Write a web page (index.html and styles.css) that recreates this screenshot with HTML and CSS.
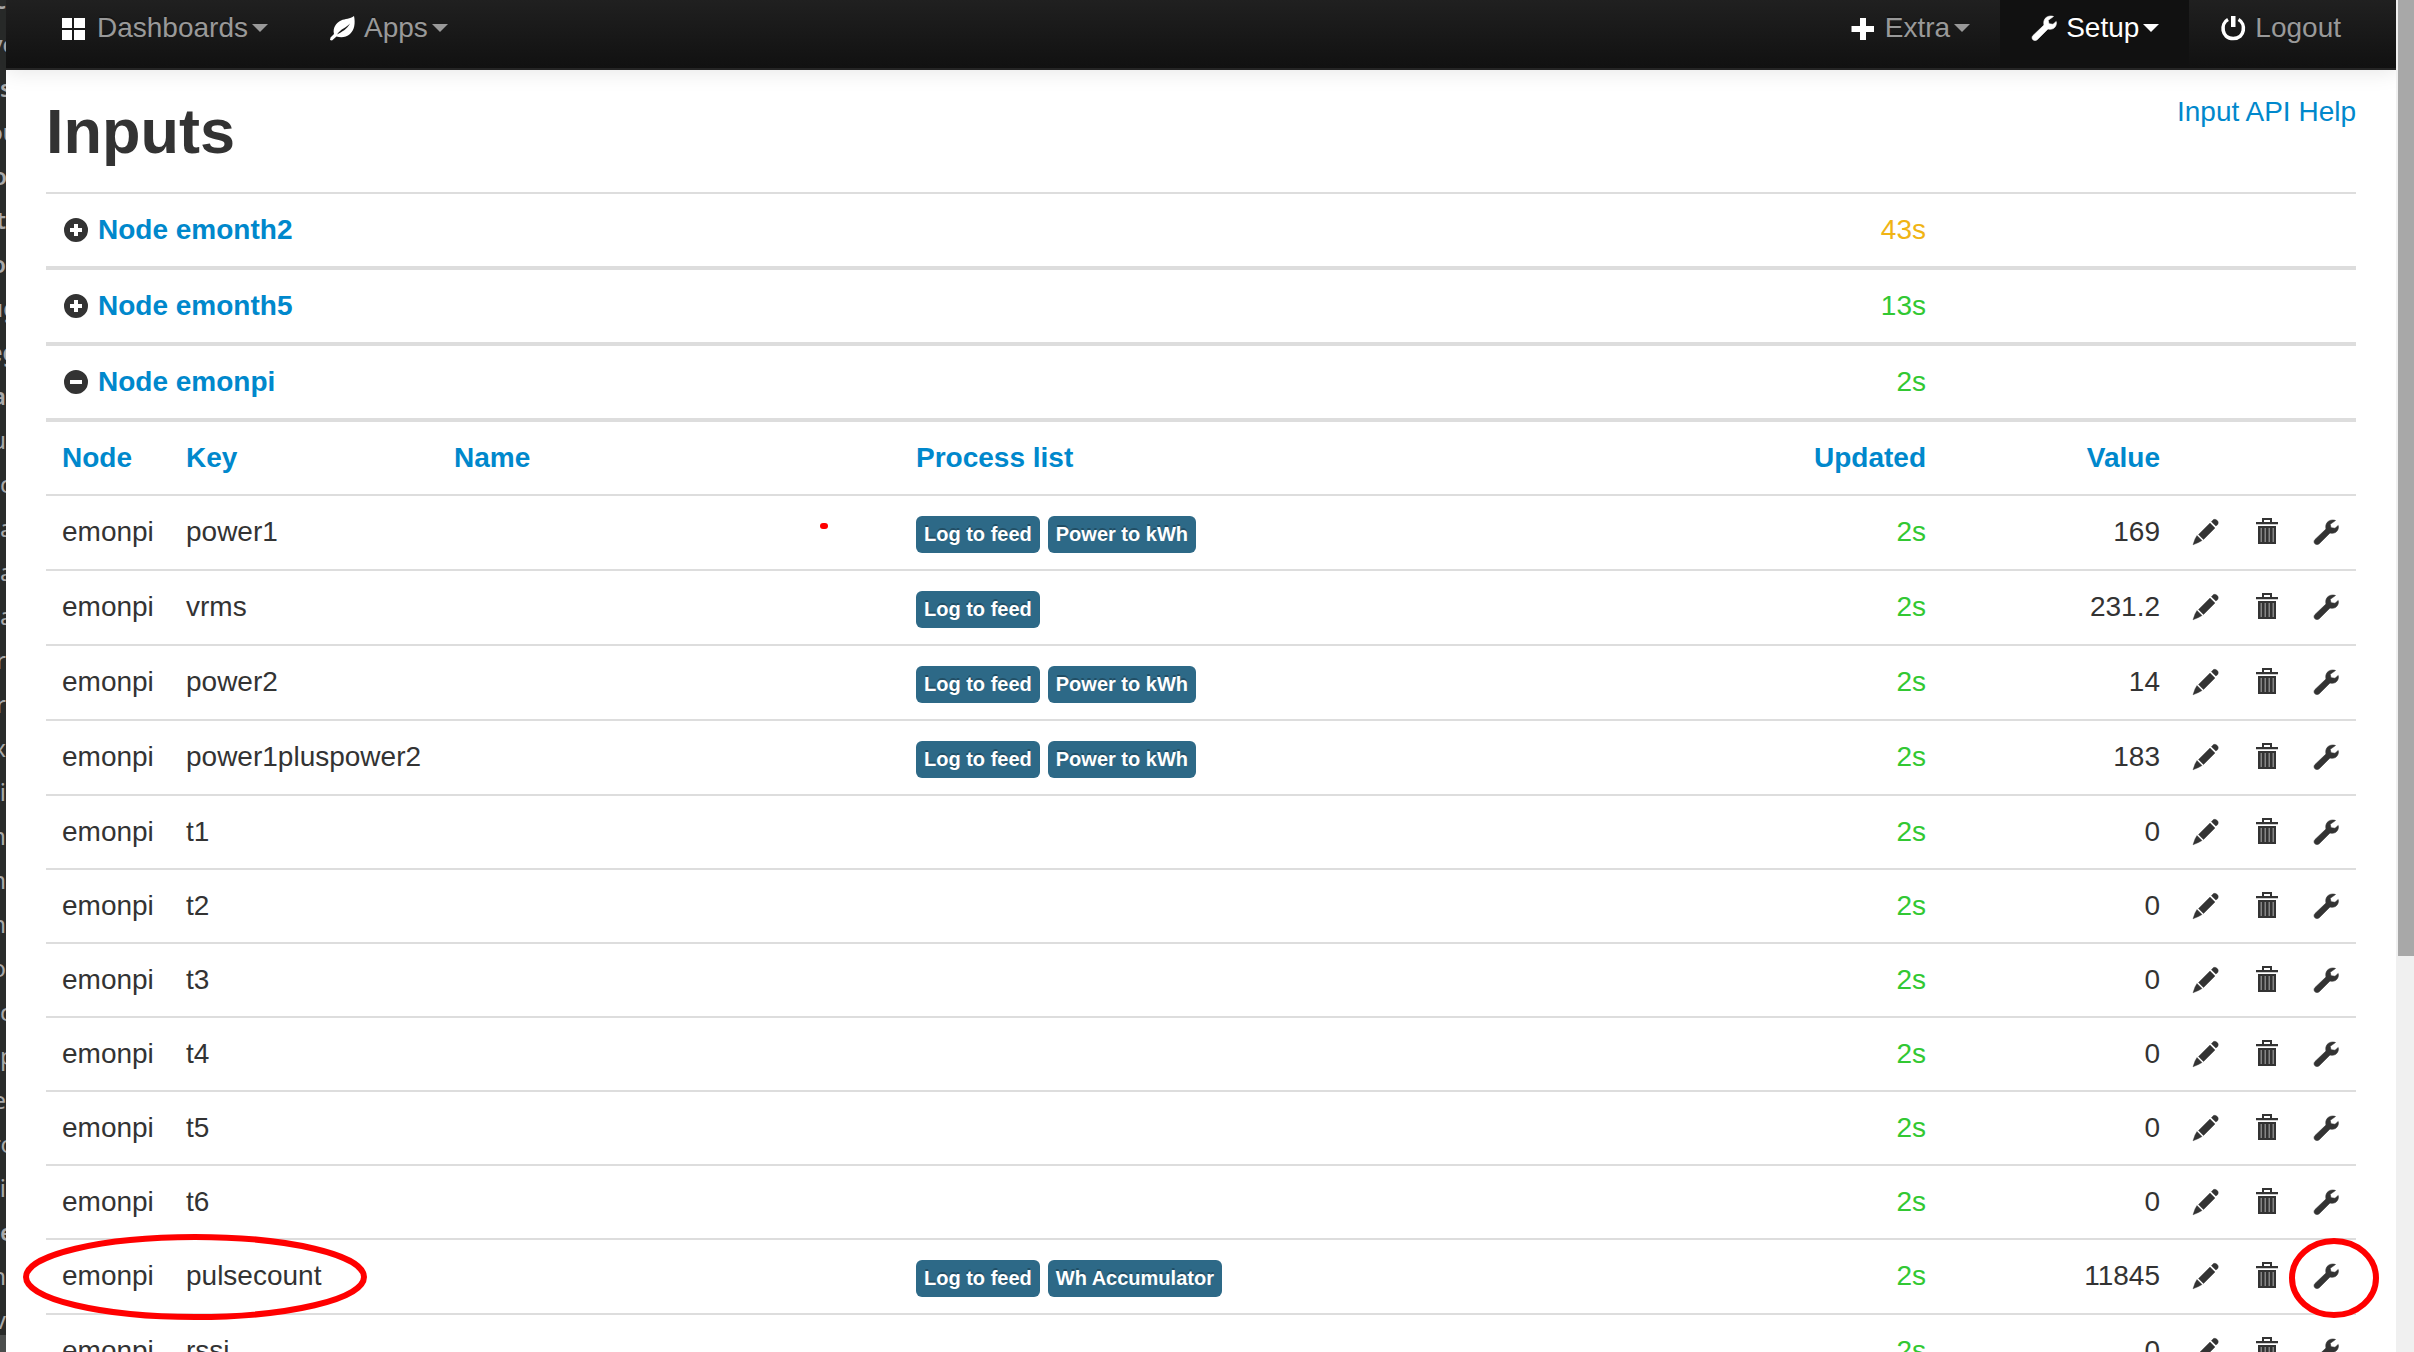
FILE: index.html
```html
<!DOCTYPE html>
<html lang="en">
<head>
<meta charset="utf-8">
<title>Inputs</title>
<link rel="stylesheet" href="styles.css">
</head>
<body>
<svg class="sprite" aria-hidden="true">
  <symbol id="grid" viewBox="0 0 28 28"><path d="M1 4h10v10H1zM13 4h11v10H13zM1 16h10v10H1zM13 16h11v10H13z"/></symbol>
  <symbol id="leaf" viewBox="0 0 28 28"><path fill-rule="evenodd" d="M26 2c1.500 7 .5 14-4 18-4 3.500-9 4-13.500 2.500L4 26.500l-2-.5.500-2.500L6 20C4.500 14 8 9 13 6.500 17.500 4.500 22 5 26 2zM9 20.500c5-2.500 10-5.500 13-11-4 4.500-9 5-13 11z"/></symbol>
  <symbol id="plus" viewBox="0 0 28 28"><path d="M11 4h6v8h8v6h-8v8h-6v-8H2.500v-6H11z"/></symbol>
  <symbol id="wrench" viewBox="0 0 28 28"><path stroke="currentColor" stroke-width=".6" d="M23.500 2.500C20 1.300 16 2.500 14.500 5.500c-1 2-.8 4-.5 5.500L3 21.500c-1.500 1.500-1 3.500 0 4.300 1 1 3 1 4.200 0L18 15c2.500.6 5 .3 6.800-1.700 1.500-1.700 1.900-4 1.400-5.800L23 10.300l-4-.6-.8-3.400z"/></symbol>
  <symbol id="power" viewBox="0 0 28 28"><path d="M12 2h4.500v11H12z"/><path d="M9 5.500C1.500 9.500 2 24.500 14.200 24.500S27 9.500 19.500 5.500" fill="none" stroke="currentColor" stroke-width="3.600"/></symbol>
  <symbol id="pencil" viewBox="0 0 28 28"><path stroke="currentColor" stroke-width=".4" d="M20.500 2.500c1-1.500 3-1.500 4.500-.2 1.600 1.400 1.600 3.200.4 4.600l-1.600 1-4.400-4.200zM18 5l5 5L11.500 21.500l-5-5zM5 17.500l5 5-3.500 2L1 26.800 3 21z"/></symbol>
  <symbol id="trash" viewBox="0 0 28 28"><path fill-rule="evenodd" d="M10 0h10v4h6v2H4V4h6zm2 2v2h6V2z"/><path d="M4 6h22v1H4z" opacity=".25"/><path fill-rule="evenodd" d="M6 8h18v18H6zm2.500 2v14h1.500V10zm4 0v14H14V10zm4 0v14H18V10zm4 0v14H22V10z"/><path d="M8 10h14v14H8z" opacity=".6"/></symbol>
  <symbol id="plus-sign" viewBox="0 0 28 28"><path fill-rule="evenodd" d="M14 2a12 12 0 1 1 0 24 12 12 0 0 1 0-24zm-2 6v4H8v4h4v4h4v-4h4v-4h-4V8z"/></symbol>
  <symbol id="minus-sign" viewBox="0 0 28 28"><path fill-rule="evenodd" d="M14 2a12 12 0 1 1 0 24 12 12 0 0 1 0-24zM8 12v4h12v-4z"/></symbol>
</svg>
<div class="app">
  <aside class="gutter">
    <ul class="gutter-list">
      <li class="strong">c</li><li class="strong split">ve</li><li class="strong start">s</li><li class="strong split">ou</li><li class="strong split">ol</li><li class="strong">t</li><li class="strong">o</li><li class="strong split">ug</li><li class="strong split">eg</li><li class="strong">a</li><li>u</li><li class="start">c</li><li class="start">a</li><li class="start">a</li><li class="start">a</li><li>r</li><li>r</li><li>x</li><li>i</li><li>m</li><li>n</li><li>n</li><li>o</li><li class="start">c</li><li class="start">p</li><li>e</li><li class="split">ro</li><li>ti</li><li class="strong start">e</li><li>h</li><li>v</li>
    </ul>
  </aside>
  <div class="page">
    <nav class="navbar">
      <div class="nav-group">
        <a class="nav-link" href="#"><svg class="icon"><use href="#grid"/></svg>Dashboards<span class="caret"></span></a>
        <a class="nav-link" href="#"><svg class="icon"><use href="#leaf"/></svg>Apps<span class="caret"></span></a>
      </div>
      <div class="nav-group">
        <a class="nav-link" href="#"><svg class="icon"><use href="#plus"/></svg>Extra<span class="caret"></span></a>
        <a class="nav-link active" href="#"><svg class="icon"><use href="#wrench"/></svg>Setup<span class="caret"></span></a>
        <a class="nav-link" href="#"><svg class="icon"><use href="#power"/></svg>Logout</a>
      </div>
    </nav>
    <main class="content">
      <header class="heading">
        <h1>Inputs</h1>
        <a href="#">Input API Help</a>
      </header>
      <table class="inputs">
        <colgroup><col class="c-node"><col class="c-key"><col class="c-name"><col><col class="c-updated"><col class="c-value"><col class="c-action"><col class="c-action"><col class="c-action"></colgroup>
        <tbody>
          <tr class="group"><th colspan="4"><a class="toggle" href="#"><svg class="icon"><use href="#plus-sign"/></svg>Node emonth2</a></th><td class="num late">43s</td><td colspan="4"></td></tr>
          <tr class="group"><th colspan="4"><a class="toggle" href="#"><svg class="icon"><use href="#plus-sign"/></svg>Node emonth5</a></th><td class="num fresh">13s</td><td colspan="4"></td></tr>
          <tr class="group"><th colspan="4"><a class="toggle" href="#"><svg class="icon"><use href="#minus-sign"/></svg>Node emonpi</a></th><td class="num fresh">2s</td><td colspan="4"></td></tr>
        </tbody>
        <tbody>
          <tr><th><a href="#">Node</a></th><th><a href="#">Key</a></th><th><a href="#">Name</a></th><th><a href="#">Process list</a></th><th class="num"><a href="#">Updated</a></th><th class="num"><a href="#">Value</a></th><th colspan="3"></th></tr>
          <tr><td>emonpi</td><td>power1</td><td class="marked"><span class="mark dot"></span></td><td><div class="labels"><span class="label">Log to feed</span><span class="label">Power to kWh</span></div></td><td class="num fresh">2s</td><td class="num">169</td><td><button class="action" aria-label="Edit"><svg class="icon"><use href="#pencil"/></svg></button></td><td><button class="action" aria-label="Delete"><svg class="icon"><use href="#trash"/></svg></button></td><td><button class="action" aria-label="Configure"><svg class="icon"><use href="#wrench"/></svg></button></td></tr>
          <tr><td>emonpi</td><td>vrms</td><td></td><td><div class="labels"><span class="label">Log to feed</span></div></td><td class="num fresh">2s</td><td class="num">231.2</td><td><button class="action" aria-label="Edit"><svg class="icon"><use href="#pencil"/></svg></button></td><td><button class="action" aria-label="Delete"><svg class="icon"><use href="#trash"/></svg></button></td><td><button class="action" aria-label="Configure"><svg class="icon"><use href="#wrench"/></svg></button></td></tr>
          <tr><td>emonpi</td><td>power2</td><td></td><td><div class="labels"><span class="label">Log to feed</span><span class="label">Power to kWh</span></div></td><td class="num fresh">2s</td><td class="num">14</td><td><button class="action" aria-label="Edit"><svg class="icon"><use href="#pencil"/></svg></button></td><td><button class="action" aria-label="Delete"><svg class="icon"><use href="#trash"/></svg></button></td><td><button class="action" aria-label="Configure"><svg class="icon"><use href="#wrench"/></svg></button></td></tr>
          <tr><td>emonpi</td><td>power1pluspower2</td><td></td><td><div class="labels"><span class="label">Log to feed</span><span class="label">Power to kWh</span></div></td><td class="num fresh">2s</td><td class="num">183</td><td><button class="action" aria-label="Edit"><svg class="icon"><use href="#pencil"/></svg></button></td><td><button class="action" aria-label="Delete"><svg class="icon"><use href="#trash"/></svg></button></td><td><button class="action" aria-label="Configure"><svg class="icon"><use href="#wrench"/></svg></button></td></tr>
          <tr><td>emonpi</td><td>t1</td><td></td><td></td><td class="num fresh">2s</td><td class="num">0</td><td><button class="action" aria-label="Edit"><svg class="icon"><use href="#pencil"/></svg></button></td><td><button class="action" aria-label="Delete"><svg class="icon"><use href="#trash"/></svg></button></td><td><button class="action" aria-label="Configure"><svg class="icon"><use href="#wrench"/></svg></button></td></tr>
          <tr><td>emonpi</td><td>t2</td><td></td><td></td><td class="num fresh">2s</td><td class="num">0</td><td><button class="action" aria-label="Edit"><svg class="icon"><use href="#pencil"/></svg></button></td><td><button class="action" aria-label="Delete"><svg class="icon"><use href="#trash"/></svg></button></td><td><button class="action" aria-label="Configure"><svg class="icon"><use href="#wrench"/></svg></button></td></tr>
          <tr><td>emonpi</td><td>t3</td><td></td><td></td><td class="num fresh">2s</td><td class="num">0</td><td><button class="action" aria-label="Edit"><svg class="icon"><use href="#pencil"/></svg></button></td><td><button class="action" aria-label="Delete"><svg class="icon"><use href="#trash"/></svg></button></td><td><button class="action" aria-label="Configure"><svg class="icon"><use href="#wrench"/></svg></button></td></tr>
          <tr><td>emonpi</td><td>t4</td><td></td><td></td><td class="num fresh">2s</td><td class="num">0</td><td><button class="action" aria-label="Edit"><svg class="icon"><use href="#pencil"/></svg></button></td><td><button class="action" aria-label="Delete"><svg class="icon"><use href="#trash"/></svg></button></td><td><button class="action" aria-label="Configure"><svg class="icon"><use href="#wrench"/></svg></button></td></tr>
          <tr><td>emonpi</td><td>t5</td><td></td><td></td><td class="num fresh">2s</td><td class="num">0</td><td><button class="action" aria-label="Edit"><svg class="icon"><use href="#pencil"/></svg></button></td><td><button class="action" aria-label="Delete"><svg class="icon"><use href="#trash"/></svg></button></td><td><button class="action" aria-label="Configure"><svg class="icon"><use href="#wrench"/></svg></button></td></tr>
          <tr><td>emonpi</td><td>t6</td><td></td><td></td><td class="num fresh">2s</td><td class="num">0</td><td><button class="action" aria-label="Edit"><svg class="icon"><use href="#pencil"/></svg></button></td><td><button class="action" aria-label="Delete"><svg class="icon"><use href="#trash"/></svg></button></td><td><button class="action" aria-label="Configure"><svg class="icon"><use href="#wrench"/></svg></button></td></tr>
          <tr><td class="marked">emonpi<svg class="mark ring-key" viewBox="0 0 344 86"><ellipse cx="172" cy="43" rx="169" ry="40"/></svg></td><td>pulsecount</td><td></td><td><div class="labels"><span class="label">Log to feed</span><span class="label">Wh Accumulator</span></div></td><td class="num fresh">2s</td><td class="num">11845</td><td><button class="action" aria-label="Edit"><svg class="icon"><use href="#pencil"/></svg></button></td><td><button class="action" aria-label="Delete"><svg class="icon"><use href="#trash"/></svg></button></td><td class="marked"><button class="action" aria-label="Configure"><svg class="icon"><use href="#wrench"/></svg></button><svg class="mark ring-action" viewBox="0 0 90 80"><ellipse cx="45" cy="40" rx="42" ry="37"/></svg></td></tr>
          <tr><td>emonpi</td><td>rssi</td><td></td><td></td><td class="num fresh">2s</td><td class="num">0</td><td><button class="action" aria-label="Edit"><svg class="icon"><use href="#pencil"/></svg></button></td><td><button class="action" aria-label="Delete"><svg class="icon"><use href="#trash"/></svg></button></td><td><button class="action" aria-label="Configure"><svg class="icon"><use href="#wrench"/></svg></button></td></tr>
        </tbody>
      </table>
    </main>
  </div>
  <div class="scrollbar"><div class="thumb"></div></div>
</div>
</body>
</html>
```
FILE: styles.css
```css
* { box-sizing: border-box; }

body {
  margin: 0;
  background: #fff;
  color: #333;
  font: 28px/40px "Liberation Sans", Arial, sans-serif;
}

a { color: #08c; text-decoration: none; }

.sprite { display: none; }

.app {
  display: flex;
  height: 100vh;
  overflow: hidden;
}

/* Sliver of the window behind */
.gutter {
  flex: none;
  width: 6px;
  overflow: hidden;
  background: linear-gradient(#292b2a, #292b2a) no-repeat 0 0 / 100% calc(100% - 17px), #4c4e4d;
}

.gutter-list {
  margin: -22px 0 0;
  padding: 0;
  list-style: none;
  color: #aaa;
  font: 24px/44px "Noto Sans", sans-serif;
}

.gutter-list li {
  display: flex;
  justify-content: flex-end;
  height: 44px;
}

.gutter-list .strong { font-weight: 600; }
.gutter-list .start { justify-content: flex-start; }
.gutter-list .split { justify-content: center; }

.page {
  flex: 1;
  min-width: 0;
}

/* Navigation */
.navbar {
  display: flex;
  justify-content: space-between;
  padding: 0 25px;
  border-bottom: 2px solid #252525;
  background: linear-gradient(#202020, #111);
  box-shadow: 0 2px 20px rgba(0, 0, 0, .1);
}

.nav-group { display: flex; }

.nav-link {
  display: flex;
  align-items: center;
  padding: 8px 30px 20px;
  color: #999;
  text-shadow: 0 -2px 0 rgba(0, 0, 0, .25);
}

.nav-link.active {
  background: #111;
  color: #fff;
}

.icon {
  flex: none;
  width: 28px;
  height: 28px;
  margin-right: 8px;
  fill: currentColor;
  color: #333;
}

.nav-link .icon { color: #fff; }

.caret {
  margin-left: 4px;
  border: 8px solid transparent;
  border-top-color: currentColor;
  border-bottom: 0;
}

/* Content */
.content { padding: 22px 40px 0; }

.heading {
  display: flex;
  justify-content: space-between;
  align-items: flex-start;
  margin-bottom: 22px;
}

h1 {
  margin: 0;
  font-size: 63px;
  line-height: 78px;
}

.inputs {
  width: 100%;
  table-layout: fixed;
  border-spacing: 0;
}

.c-node { width: 124px; }
.c-key { width: 268px; }
.c-name { width: 462px; }
.c-updated { width: 200px; }
.c-value { width: 234px; }
.c-action { width: 60px; }

.inputs th,
.inputs td {
  padding: 16px;
  border-top: 2px solid #ddd;
  text-align: left;
  vertical-align: top;
}

.inputs .group th,
.inputs .group td { border-bottom: 2px solid #ddd; }

.inputs .num { text-align: right; }

.fresh { color: #32c832; }
.late { color: #f0b414; }

.toggle {
  display: flex;
  align-items: center;
}

.labels {
  display: flex;
  gap: 8px;
  padding-top: 4px;
}

.label {
  padding: 4px 8px;
  border-radius: 6px;
  background: #2d6987;
  color: #fff;
  font-size: 20px;
  font-weight: bold;
  line-height: 29px;
  text-shadow: 0 -2px 0 rgba(0, 0, 0, .25);
}

.action {
  display: flex;
  align-items: center;
  height: 40px;
  padding: 0;
  border: 0;
  background: none;
}

.action .icon { margin: 0; }

/* Red annotations over the table */
.marked { position: relative; }

.mark {
  position: absolute;
  fill: none;
  stroke: #f00;
  stroke-width: 6px;
  pointer-events: none;
}

.dot {
  top: 27px;
  left: 382px;
  width: 8px;
  height: 6px;
  border-radius: 3px;
  background: #f00;
}

.ring-key {
  top: -6px;
  left: -23px;
  width: 344px;
  height: 86px;
}

.ring-action {
  top: -2px;
  left: -7px;
  width: 90px;
  height: 80px;
}

/* Scrollbar */
.scrollbar {
  flex: none;
  width: 18px;
  padding-left: 2px;
  background: #f0f0f0;
}

.thumb {
  height: 956px;
  background: #a8a8a8;
}
```
